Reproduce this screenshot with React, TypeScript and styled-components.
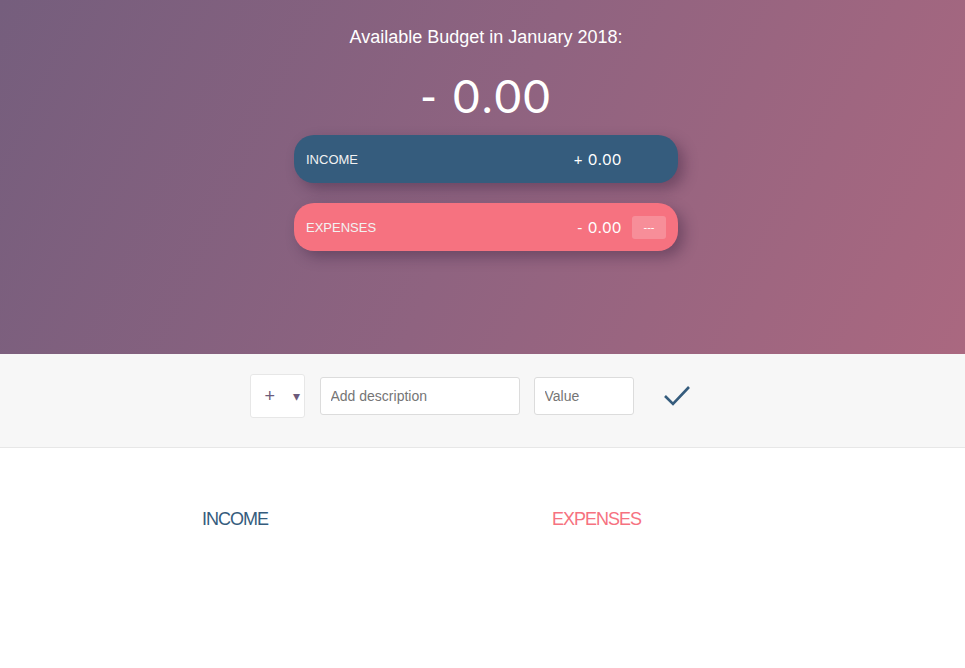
import React from "react";
import styled, { createGlobalStyle } from "styled-components";

const GlobalStyle = createGlobalStyle`
  * { box-sizing: border-box; margin: 0; padding: 0; }
  body {
    margin: 0;
    font-family: "Liberation Sans", Arial, sans-serif;
    color: #555;
    background: #fff;
  }
`;

const Top = styled.div`
  height: 354px;
  background: linear-gradient(115deg, #755e7d 0%, #8f6380 50%, #aa6880 100%);
  display: flex;
  justify-content: center;
  padding-top: 26px;
`;

const Budget = styled.div`
  width: 384px;
  margin-left: 7px;
  color: #fff;
  display: flex;
  flex-direction: column;
`;

const Title = styled.div`
  font-size: 18px;
  line-height: 22px;
  text-align: center;
`;

const BigValue = styled.div`
  font-family: Lato, sans-serif;
  font-weight: 400;
  font-size: 46px;
  line-height: 54px;
  letter-spacing: 2px;
  text-align: center;
  margin-top: 21px;
  margin-bottom: 12px;
`;

const Bar = styled.div<{ $tone: string; $gap?: number }>`
  display: flex;
  align-items: center;
  height: 48px;
  padding: 0 12px;
  border-radius: 20px;
  background: ${(p) => p.$tone};
  box-shadow: 6px 6px 14px rgba(40, 20, 50, 0.35);
  margin-bottom: ${(p) => p.$gap ?? 0}px;
`;

const BarLabel = styled.div`
  flex: 1;
  font-size: 13px;
  color: #f2f2f2;
  text-transform: uppercase;
`;

const BarValue = styled.div`
  font-family: Lato, sans-serif;
  font-size: 15px;
  letter-spacing: 1px;
  color: #fff;
`;

const Percent = styled.div<{ $visible: boolean }>`
  width: 34px;
  height: 23px;
  margin-left: 10px;
  border-radius: 3px;
  display: flex;
  align-items: center;
  justify-content: center;
  font-size: 11px;
  color: #fff;
  background: ${(p) => (p.$visible ? "rgba(255, 255, 255, 0.2)" : "transparent")};
`;

const Add = styled.div`
  background: #f7f7f7;
  border-bottom: 1px solid #e7e7e7;
  height: 94px;
  padding-top: 20px;
  display: flex;
  justify-content: center;
  align-items: flex-start;
`;

const AddRow = styled.div`
  display: flex;
  align-items: center;
  height: 44px;
  margin-left: -24px;
`;

const TypeBox = styled.div`
  width: 55px;
  height: 44px;
  background: #fff;
  border: 1px solid #e7e7e7;
  border-radius: 3px;
  display: flex;
  align-items: center;
  padding-left: 14px;
  color: #6c5b7b;
  margin-right: 15px;
`;

const Plus = styled.span`
  font-size: 18px;
  font-weight: 300;
  width: 28px;
`;

const Caret = styled.span`
  font-size: 14px;
`;

const Input = styled.input<{ $w: number }>`
  width: ${(p) => p.$w}px;
  height: 38px;
  border: 1px solid #dcdcdc;
  border-radius: 3px;
  background: #fff;
  font-family: "Liberation Sans", Arial, sans-serif;
  font-size: 14px;
  padding: 0 10px;
  color: #555;
  margin-right: 14px;
  outline: none;
  &::placeholder { color: #757575; }
`;

const CheckButton = styled.button`
  background: none;
  border: none;
  margin-left: 14px;
  width: 30px;
  height: 30px;
  display: flex;
  align-items: center;
  justify-content: center;
  cursor: pointer;
`;

const Lists = styled.div`
  width: 561px;
  margin: 0 auto;
  padding-top: 61px;
  display: grid;
  grid-template-columns: 350px 1fr;
`;

const ListTitle = styled.h2<{ $color: string }>`
  font-size: 18px;
  font-weight: 400;
  letter-spacing: -1px;
  color: ${(p) => p.$color};
  text-transform: uppercase;
`;

export default function App() {
  return (
    <>
      <GlobalStyle />
      <Top>
        <Budget>
          <Title>Available Budget in January 2018:</Title>
          <BigValue>- 0.00</BigValue>
          <Bar $tone="#355c7d" $gap={20}>
            <BarLabel>Income</BarLabel>
            <BarValue>+ 0.00</BarValue>
            <Percent $visible={false}>&nbsp;</Percent>
          </Bar>
          <Bar $tone="#f67280">
            <BarLabel>Expenses</BarLabel>
            <BarValue>- 0.00</BarValue>
            <Percent $visible={true}>---</Percent>
          </Bar>
        </Budget>
      </Top>
      <Add>
        <AddRow>
          <TypeBox>
            <Plus>+</Plus>
            <Caret>▾</Caret>
          </TypeBox>
          <Input $w={200} placeholder="Add description" />
          <Input $w={100} placeholder="Value" />
          <CheckButton>
            <svg width="28" height="24" viewBox="0 0 28 24">
              <path d="M2 12 L10 20 L26 3" fill="none" stroke="#355c7d" strokeWidth="2.6" />
            </svg>
          </CheckButton>
        </AddRow>
      </Add>
      <Lists>
        <ListTitle $color="#355c7d">Income</ListTitle>
        <ListTitle $color="#f67280">Expenses</ListTitle>
      </Lists>
    </>
  );
}
